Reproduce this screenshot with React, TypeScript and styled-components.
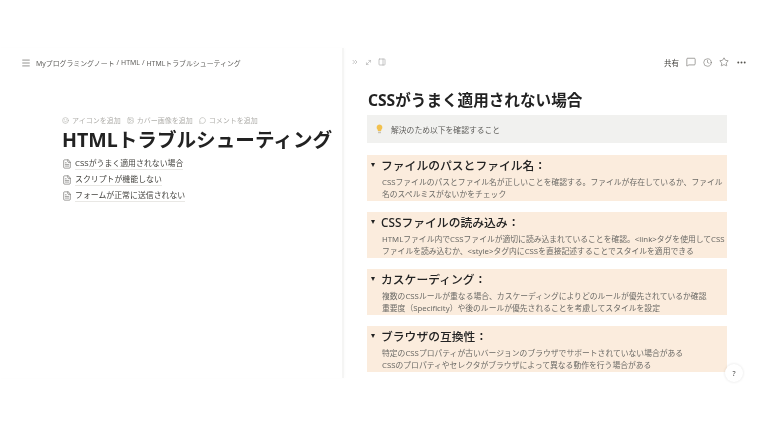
import { createGlobalStyle } from "styled-components";
import styled from "styled-components";
import { FileText, Menu, MessageSquare, Clock, Star, MoreHorizontal, ChevronsRight, PanelRight, Smile, Image, MessageCircle, MoveDiagonal } from "lucide-react";

const GlobalStyle = createGlobalStyle`
  html, body {
    margin: 0;
    padding: 0;
    background: #fff;
    font-family: "Noto Sans", "Noto Sans CJK JP", sans-serif;
  }
`;

const Page = styled.div`
  width: 768px;
  height: 432px;
  padding-top: 48px;
  box-sizing: border-box;
  overflow: hidden;
  filter: blur(0.3px);
`;

const Split = styled.div`
  display: flex;
  height: 330px;
`;

const LeftPane = styled.div`
  width: 344px;
  flex: none;
  box-sizing: border-box;
  border-right: 2px solid #f5f5f4;
  box-shadow: 1px 0 3px rgba(0, 0, 0, 0.02);
`;

const TopBar = styled.div`
  display: flex;
  align-items: center;
  height: 30px;
  color: #55534e;
`;

const LeftBar = styled(TopBar)`
  padding-left: 21px;
  gap: 5px;
`;

const Crumbs = styled.div`
  display: flex;
  gap: 2px;
  font-size: 6.9px;
  color: #5f5e5b;
  white-space: nowrap;
`;

const LeftBody = styled.div`
  padding: 35px 0 0 62px;
`;

const MetaRow = styled.div`
  display: flex;
  gap: 6px;
  font-size: 7px;
  color: #b0afab;
  height: 14px;
  align-items: center;
`;

const MetaItem = styled.span`
  display: flex;
  align-items: center;
  gap: 3px;
  white-space: nowrap;
`;

const PageTitle = styled.h1`
  margin: -1px 0 2px;
  font-size: 19.6px;
  line-height: 28px;
  font-weight: 700;
  color: #222;
  white-space: nowrap;
`;

const PageLink = styled.div`
  display: flex;
  align-items: center;
  gap: 3px;
  height: 16px;
  font-size: 7.9px;
  color: #44433f;
  white-space: nowrap;
`;

const LinkLabel = styled.span`
  border-bottom: 1px solid #e9e8e5;
  line-height: 11px;
`;

const RightPane = styled.div`
  flex: 1;
  min-width: 0;
  display: flex;
  flex-direction: column;
  position: relative;
`;

const RightBar = styled(TopBar)`
  padding: 0 21px 2px 7px;
  box-sizing: border-box;
  justify-content: space-between;
`;

const IconGroup = styled.div<{ $gap: number; $muted?: boolean }>`
  display: flex;
  align-items: center;
  gap: ${(p) => p.$gap}px;
  color: ${(p) => (p.$muted ? "#aaa" : "inherit")};
`;

const Share = styled.span`
  font-size: 7.5px;
  color: #44433f;
`;

const Doc = styled.div`
  padding: 0 41px 0 23px;
  margin-bottom: 5px;
  overflow: hidden;
  flex: 1;
`;

const DocTitle = styled.h2`
  margin: 11px 0 4px 1px;
  font-size: 15.6px;
  line-height: 22px;
  font-weight: 700;
  color: #222;
`;

const Callout = styled.div`
  display: flex;
  align-items: center;
  gap: 7px;
  height: 28px;
  padding-left: 8px;
  margin-bottom: 12px;
  background: #f1f1ef;
  font-size: 7.8px;
  color: #5f5e5b;
`;

const Toggle = styled.section`
  background: #fbecdd;
  height: 46px;
  margin-bottom: 11px;
  padding: 1px 0 0 4px;
  box-sizing: border-box;
`;

const ToggleHead = styled.div`
  display: flex;
  align-items: center;
  gap: 6px;
  height: 17px;
`;

const Caret = styled.span`
  width: 0;
  height: 0;
  border-left: 2.5px solid transparent;
  border-right: 2.5px solid transparent;
  border-top: 4px solid #222;
`;

const ToggleTitle = styled.h3`
  margin: 0;
  font-size: 11.8px;
  font-weight: 500;
  color: #222;
  white-space: nowrap;
`;

const ToggleBody = styled.p`
  margin: 3px 0 0 11px;
  font-size: 7.8px;
  line-height: 12.3px;
  color: #6b6a66;
  white-space: pre;
`;

const HelpButton = styled.div`
  position: absolute;
  right: 25px;
  bottom: -4px;
  width: 18px;
  height: 18px;
  border-radius: 50%;
  background: #fff;
  box-shadow: 0 0 3px rgba(0, 0, 0, 0.12);
  font-size: 7px;
  color: #444;
  display: flex;
  align-items: center;
  justify-content: center;
`;

const links = ["CSSがうまく適用されない場合", "スクリプトが機能しない", "フォームが正常に送信されない"];

const toggles = [
  {
    title: "ファイルのパスとファイル名：",
    body: "CSSファイルのパスとファイル名が正しいことを確認する。ファイルが存在しているか、ファイル\n名のスペルミスがないかをチェック",
  },
  {
    title: "CSSファイルの読み込み：",
    body: "HTMLファイル内でCSSファイルが適切に読み込まれていることを確認。<link>タグを使用してCSS\nファイルを読み込むか、<style>タグ内にCSSを直接記述することでスタイルを適用できる",
  },
  {
    title: "カスケーディング：",
    body: "複数のCSSルールが重なる場合、カスケーディングによりどのルールが優先されているか確認\n重要度（Specificity）や後のルールが優先されることを考慮してスタイルを設定",
  },
  {
    title: "ブラウザの互換性：",
    body: "特定のCSSプロパティが古いバージョンのブラウザでサポートされていない場合がある\nCSSのプロパティやセレクタがブラウザによって異なる動作を行う場合がある",
  },
];

const Bulb = () => (
  <svg width="9" height="10" viewBox="0 0 9 10">
    <path d="M4.5 0.5a3 3 0 0 0-1.7 5.4V7h3.4V5.9A3 3 0 0 0 4.5 0.5z" fill="#f2c14e" />
    <rect x="3" y="7.6" width="3" height="1.6" fill="#c9c3b4" />
  </svg>
);

export default function App() {
  return (
    <Page>
      <GlobalStyle />
      <Split>
        <LeftPane>
          <LeftBar>
            <Menu size={10} strokeWidth={1.5} />
            <Crumbs>
              <span>Myプログラミングノート</span>
              <span>/</span>
              <span>HTML</span>
              <span>/</span>
              <span>HTMLトラブルシューティング</span>
            </Crumbs>
          </LeftBar>
          <LeftBody>
            <MetaRow>
              <MetaItem><Smile size={7} />アイコンを追加</MetaItem>
              <MetaItem><Image size={7} />カバー画像を追加</MetaItem>
              <MetaItem><MessageCircle size={7} />コメントを追加</MetaItem>
            </MetaRow>
            <PageTitle>HTMLトラブルシューティング</PageTitle>
            {links.map((l) => (
              <PageLink key={l}>
                <FileText size={10} strokeWidth={1.2} />
                <LinkLabel>{l}</LinkLabel>
              </PageLink>
            ))}
          </LeftBody>
        </LeftPane>
        <RightPane>
          <RightBar>
            <IconGroup $gap={6} $muted>
              <ChevronsRight size={8} />
              <MoveDiagonal size={7} />
              <PanelRight size={8} />
            </IconGroup>
            <IconGroup $gap={7}>
              <Share>共有</Share>
              <MessageSquare size={10} strokeWidth={1.3} />
              <Clock size={9} strokeWidth={1.3} />
              <Star size={10} strokeWidth={1.3} />
              <MoreHorizontal size={11} strokeWidth={2.2} />
            </IconGroup>
          </RightBar>
          <Doc>
            <DocTitle>CSSがうまく適用されない場合</DocTitle>
            <Callout>
              <Bulb />
              解決のため以下を確認すること
            </Callout>
            {toggles.map((t) => (
              <Toggle key={t.title}>
                <ToggleHead>
                  <Caret />
                  <ToggleTitle>{t.title}</ToggleTitle>
                </ToggleHead>
                <ToggleBody>{t.body}</ToggleBody>
              </Toggle>
            ))}
          </Doc>
          <HelpButton>?</HelpButton>
        </RightPane>
      </Split>
    </Page>
  );
}
